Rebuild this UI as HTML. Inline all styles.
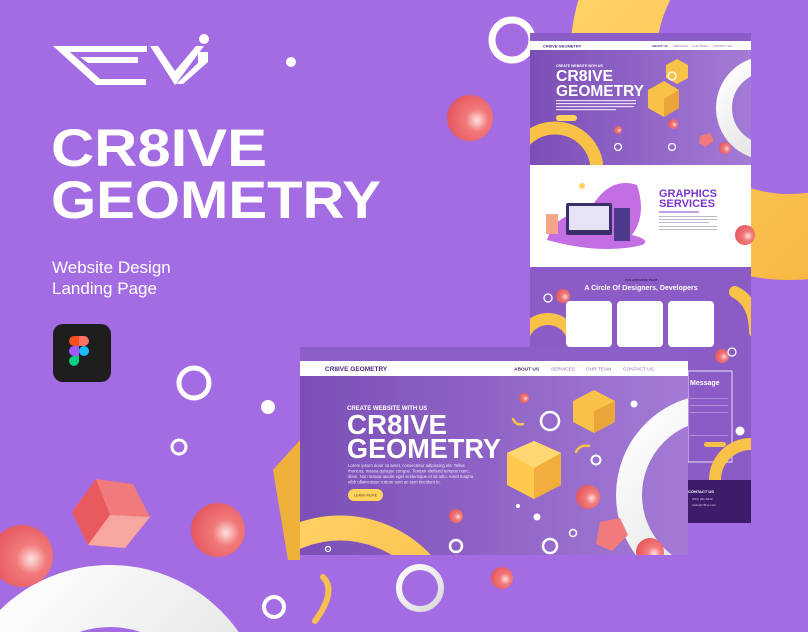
<!DOCTYPE html>
<html><head><meta charset="utf-8"><style>
html,body{margin:0;padding:0;width:808px;height:632px;overflow:hidden;background:#a46ce3}
svg{display:block}
text{font-family:"Liberation Sans",sans-serif}
</style></head><body>
<svg width="808" height="632" viewBox="0 0 808 632" xmlns="http://www.w3.org/2000/svg">
<defs>
<radialGradient id="sph" cx="0.65" cy="0.55" r="0.7"><stop offset="0" stop-color="#fde0e0"/><stop offset="0.35" stop-color="#f2797a"/><stop offset="1" stop-color="#e1535a"/></radialGradient>
<linearGradient id="wring" x1="0" y1="0" x2="1" y2="1"><stop offset="0" stop-color="#ffffff"/><stop offset="1" stop-color="#d8d8d8"/></linearGradient>
<linearGradient id="hero" x1="0" y1="0" x2="1" y2="0"><stop offset="0" stop-color="#7b4fb6"/><stop offset="1" stop-color="#a47ad6"/></linearGradient>
<linearGradient id="yel" x1="0" y1="0" x2="1" y2="1"><stop offset="0" stop-color="#ffd66b"/><stop offset="1" stop-color="#f7b33c"/></linearGradient>
<clipPath id="cR"><rect x="530" y="33" width="221" height="490"/></clipPath>
<clipPath id="cF"><rect x="300" y="347" width="388" height="208"/></clipPath>
<filter id="sh" x="-20%" y="-20%" width="140%" height="140%"><feDropShadow dx="-6" dy="6" stdDeviation="8" flood-color="#4a1f8a" flood-opacity="0.35"/></filter>
</defs>

<circle cx="790" cy="60" r="177" fill="none" stroke="url(#yel)" stroke-width="86"/>
<circle cx="110" cy="722" r="126" fill="none" stroke="url(#wring)" stroke-width="62"/>

<g fill="#fff">
<polygon points="53,46 108,46 116,52 70,52 100,79 146,79 146,85 96,85"/>
<polygon points="80,57 138,57 138,63 88,63"/>
<polygon points="98,46 147,46 147,52 106,52"/>
<polygon points="150,46 158,46 175,71 196,46 204,46 175,85"/>
<polygon points="198,52 208,52 208,62 183,84 176,84 198,63"/>
<circle cx="204" cy="39" r="5"/>
</g>
<circle cx="291" cy="62" r="5" fill="#fff"/>

<text x="51" y="166" font-size="53" font-weight="700" fill="#fff" textLength="216" lengthAdjust="spacingAndGlyphs">CR8IVE</text>
<text x="51" y="218" font-size="53" font-weight="700" fill="#fff" textLength="330" lengthAdjust="spacingAndGlyphs">GEOMETRY</text>
<text x="52" y="273" font-size="17" fill="#fff">Website Design</text>
<text x="52" y="294" font-size="17" fill="#fff">Landing Page</text>

<rect x="53" y="324" width="58" height="58" rx="10" fill="#1e1e1e"/>
<path d="M69,336h10v10h-5a5,5 0 0 1 0-10z" fill="#f24e1e"/>
<path d="M79,336h5a5,5 0 0 1 0,10h-5z" fill="#ff7262"/>
<path d="M69,346h10v10h-5a5,5 0 0 1 0-10z" fill="#a259ff"/>
<circle cx="84" cy="351" r="5" fill="#1abcfe"/>
<path d="M74,356h5v5a5,5 0 1 1 -5-5z" fill="#0acf83"/>

<circle cx="194" cy="383" r="15" fill="none" stroke="#fff" stroke-width="5"/>
<circle cx="268" cy="407" r="7" fill="#fff"/>
<circle cx="179" cy="447" r="7" fill="none" stroke="#fff" stroke-width="3"/>
<circle cx="470" cy="118" r="23" fill="url(#sph)"/>
<circle cx="512" cy="40" r="20" fill="none" stroke="#fff" stroke-width="7"/>
<g>
<polygon points="96,479 133,484 150,517 125,548 88,545 72,512" fill="#f07a7c"/>
<polygon points="96,479 72,512 88,545 110,515" fill="#e85a5e"/>
<polygon points="110,515 150,517 125,548 88,545" fill="#f7a7a0"/>
</g>
<circle cx="218" cy="530" r="27" fill="url(#sph)"/>
<circle cx="22" cy="556" r="31" fill="url(#sph)"/>
<polygon points="273,470 300,440 300,560 288,560" fill="#f0b13a"/>
<circle cx="274" cy="607" r="10" fill="none" stroke="#fff" stroke-width="4"/>
<circle cx="420" cy="588" r="21" fill="none" stroke="url(#wring)" stroke-width="6"/>
<path d="M323,577 q14,14 -8,44" fill="none" stroke="#f5c04e" stroke-width="6" stroke-linecap="round"/>
<circle cx="502" cy="578" r="11" fill="url(#sph)"/>

<g clip-path="url(#cR)" filter="url(#sh)">
<rect x="530" y="33" width="221" height="490" fill="#8a5cc6"/>
<rect x="530" y="41" width="221" height="9" fill="#fff"/>
<text x="543" y="47.5" font-size="4" font-weight="700" fill="#4a2a80">CR8IVE GEOMETRY</text>
<text x="652" y="47" font-size="3" font-weight="700" fill="#4a2a80">ABOUT US</text>
<text x="673" y="47" font-size="3" fill="#8a6aae">SERVICES</text>
<text x="692" y="47" font-size="3" fill="#8a6aae">OUR TEAM</text>
<text x="713" y="47" font-size="3" fill="#8a6aae">CONTACT US</text>
<rect x="530" y="50" width="221" height="115" fill="url(#hero)"/>
<text x="556" y="67" font-size="3.5" font-weight="700" fill="#fff">CREATE WEBSITE WITH US</text>
<text x="556" y="81" font-size="16" font-weight="700" fill="#fff" textLength="57" lengthAdjust="spacingAndGlyphs">CR8IVE</text>
<text x="556" y="96" font-size="16" font-weight="700" fill="#fff" textLength="88" lengthAdjust="spacingAndGlyphs">GEOMETRY</text>
<rect x="556" y="100" width="80" height="1.2" fill="#e8dcf6"/><rect x="556" y="103" width="80" height="1.2" fill="#e8dcf6"/><rect x="556" y="106" width="78" height="1.2" fill="#e8dcf6"/><rect x="556" y="109" width="60" height="1.2" fill="#e8dcf6"/>
<rect x="556" y="115" width="21" height="6" rx="3" fill="#ffd35c"/>
<circle cx="555" cy="170" r="42" fill="none" stroke="#f8c24a" stroke-width="13"/>
<polygon points="666,65 677,59 688,65 688,78 677,84 666,78" fill="#f8c24a"/>
<polygon points="648,90 664,81 679,90 679,108 664,117 648,108" fill="#f8c24a"/>
<polygon points="664,99 679,90 679,108 664,117" fill="#e9a43a"/>
<circle cx="768" cy="108" r="44" fill="none" stroke="url(#wring)" stroke-width="16"/>
<circle cx="673" cy="124" r="5" fill="url(#sph)"/>
<circle cx="725" cy="148" r="6" fill="url(#sph)"/>
<polygon points="700,136 710,133 714,141 705,147 699,143" fill="#f07a7c"/>
<circle cx="618" cy="130" r="4" fill="url(#sph)"/>
<circle cx="672" cy="76" r="4" fill="none" stroke="#fff" stroke-width="1.3"/>
<circle cx="618" cy="147" r="3.5" fill="none" stroke="#fff" stroke-width="1.3"/>
<circle cx="672" cy="147" r="3.5" fill="none" stroke="#fff" stroke-width="1.3"/>
<rect x="530" y="165" width="221" height="102" fill="#fff"/>
<path d="M547,240 q10,-30 40,-25 q20,-40 50,-30 q10,30 -5,50 q20,5 10,10 q-40,10 -95,-5z" fill="#c46ee4"/>
<rect x="566" y="203" width="46" height="32" rx="2" fill="#3b2d6a"/>
<rect x="569" y="206" width="40" height="24" fill="#e8e2f6"/>
<rect x="614" y="208" width="16" height="33" fill="#4c3a8a"/>
<rect x="546" y="214" width="12" height="20" fill="#f4a58a"/>
<circle cx="582" cy="186" r="3" fill="#ffd35c"/>
<text x="659" y="197" font-size="11" font-weight="700" fill="#7a35d0" textLength="58" lengthAdjust="spacingAndGlyphs">GRAPHICS</text>
<text x="659" y="207" font-size="11" font-weight="700" fill="#7a35d0" textLength="56" lengthAdjust="spacingAndGlyphs">SERVICES</text>
<rect x="659" y="211" width="40" height="2" fill="#c4a0ea"/>
<rect x="659" y="216" width="58" height="0.9" fill="#b8b0c8"/><rect x="659" y="219" width="58" height="0.9" fill="#b8b0c8"/><rect x="659" y="222" width="50" height="0.9" fill="#b8b0c8"/><rect x="659" y="226" width="58" height="0.9" fill="#b8b0c8"/><rect x="659" y="229" width="58" height="0.9" fill="#b8b0c8"/>
<rect x="530" y="267" width="221" height="213" fill="#8b5cc6"/>
<text x="641" y="281" font-size="3" text-anchor="middle" fill="#3a1f66" font-weight="700">OUR AWESOME TEAM</text>
<text x="641" y="290" font-size="7" text-anchor="middle" fill="#fff" font-weight="700">A Circle Of Designers, Developers</text>
<circle cx="548" cy="298" r="4" fill="none" stroke="#fff" stroke-width="1.3"/>
<circle cx="563" cy="296" r="7" fill="url(#sph)"/>
<circle cx="548" cy="345" r="26" fill="none" stroke="#f8c24a" stroke-width="12"/>
<path d="M735,292 q20,10 20,40" fill="none" stroke="#f8c24a" stroke-width="12" stroke-linecap="round"/>
<rect x="566" y="301" width="46" height="46" rx="4" fill="#fff"/>
<rect x="617" y="301" width="46" height="46" rx="4" fill="#fff"/>
<rect x="668" y="301" width="46" height="46" rx="4" fill="#fff"/>
<circle cx="722" cy="356" r="7" fill="url(#sph)"/>
<circle cx="732" cy="352" r="4" fill="none" stroke="#fff" stroke-width="1.2"/>
<rect x="688" y="371" width="44" height="91" fill="none" stroke="#fff" stroke-width="0.8"/>
<text x="690" y="385" font-size="7" font-weight="700" fill="#fff">Message</text>
<rect x="690" y="398" width="38" height="0.8" fill="#b89ae0"/><rect x="690" y="405" width="38" height="0.8" fill="#b89ae0"/><rect x="690" y="412" width="38" height="0.8" fill="#b89ae0"/><rect x="690" y="435" width="38" height="0.8" fill="#b89ae0"/>
<rect x="704" y="442" width="22" height="5" rx="2.5" fill="#f8c24a"/>
<circle cx="740" cy="431" r="4.5" fill="#fff"/>
<circle cx="751" cy="480" r="36" fill="none" stroke="#f8c24a" stroke-width="12"/>
<rect x="530" y="480" width="221" height="43" fill="#3e1f6a"/>
<text x="688" y="493" font-size="4" font-weight="700" fill="#fff">CONTACT US</text>
<text x="692" y="500" font-size="3" fill="#d8c8ee">(614) 321-5432</text>
<text x="692" y="506" font-size="3" fill="#d8c8ee">hello@cr8ive.com</text>
</g>
<circle cx="745" cy="235" r="10" fill="url(#sph)"/>

<g clip-path="url(#cF)" filter="url(#sh)">
<rect x="300" y="347" width="388" height="208" fill="#8c5ec8"/>
<rect x="300" y="361" width="388" height="15" fill="#fff"/>
<text x="325" y="371" font-size="6.5" font-weight="700" fill="#4a2a80">CR8IVE GEOMETRY</text>
<text x="514" y="370.5" font-size="4.8" font-weight="700" fill="#3a2066">ABOUT US</text>
<text x="551" y="370.5" font-size="4.8" fill="#8a6aae">SERVICES</text>
<text x="586" y="370.5" font-size="4.8" fill="#8a6aae">OUR TEAM</text>
<text x="623" y="370.5" font-size="4.8" fill="#8a6aae">CONTACT US</text>
<rect x="300" y="376" width="388" height="179" fill="url(#hero)"/>
<circle cx="717" cy="495" r="88" fill="none" stroke="url(#wring)" stroke-width="26"/>
<circle cx="340" cy="640" r="112" fill="none" stroke="url(#yel)" stroke-width="25"/>
<text x="347" y="410" font-size="6" font-weight="700" fill="#fff">CREATE WEBSITE WITH US</text>
<text x="347" y="434" font-size="28" font-weight="700" fill="#fff" textLength="100" lengthAdjust="spacingAndGlyphs">CR8IVE</text>
<text x="347" y="458" font-size="28" font-weight="700" fill="#fff" textLength="154" lengthAdjust="spacingAndGlyphs">GEOMETRY</text>
<text x="348" y="467" font-size="4.3" fill="#f0e6fb">Lorem ipsum dolor sit amet, consectetur adipiscing elit. Tellus</text>
<text x="348" y="472.5" font-size="4.3" fill="#f0e6fb">rhoncus, massa quisque congue. Tempor eleifend tempus nunc,</text>
<text x="348" y="478" font-size="4.3" fill="#f0e6fb">diam. Non massa iaculis eget scelerisque et sit odio. Amet magna</text>
<text x="348" y="483.5" font-size="4.3" fill="#f0e6fb">nibh ullamcorper rutrum sem ac sem tincidunt in.</text>
<rect x="348" y="489" width="35" height="12" rx="6" fill="#ffd35c"/>
<text x="365.5" y="496.5" font-size="3.5" text-anchor="middle" fill="#6a4a20">LEARN MORE</text>
<polygon points="573,401 594,390 615,401 615,422 594,433 573,422" fill="#f8c24a"/>
<polygon points="594,411 615,401 615,422 594,433" fill="#eaa63a"/>
<polygon points="507,453 534,441 561,453 561,485 534,499 507,485" fill="#ffc94e"/>
<polygon points="534,468 561,453 561,485 534,499" fill="#f2ae3c"/>
<polygon points="507,453 534,441 561,453 534,468" fill="#ffd873"/>
<circle cx="524" cy="398" r="5" fill="url(#sph)"/>
<circle cx="588" cy="497" r="12" fill="url(#sph)"/>
<circle cx="456" cy="516" r="7" fill="url(#sph)"/>
<polygon points="600,522 620,518 628,535 612,551 596,544" fill="#f07a7c"/>
<circle cx="650" cy="552" r="14" fill="url(#sph)"/>
<circle cx="550" cy="421" r="9" fill="none" stroke="#fff" stroke-width="2.5"/>
<circle cx="596" cy="460" r="4.5" fill="none" stroke="#fff" stroke-width="2"/>
<circle cx="456" cy="546" r="6" fill="none" stroke="#fff" stroke-width="2.5"/>
<circle cx="550" cy="546" r="7" fill="none" stroke="#fff" stroke-width="2.5"/>
<circle cx="573" cy="533" r="3.5" fill="none" stroke="#fff" stroke-width="1.5"/>
<circle cx="634" cy="404" r="3.5" fill="#fff"/>
<circle cx="537" cy="517" r="3.5" fill="#fff"/>
<circle cx="518" cy="506" r="2" fill="#fff"/>
<circle cx="328" cy="549" r="2.5" fill="none" stroke="#fff" stroke-width="1.2"/>
<path d="M513,419 q3,7 10,5" fill="none" stroke="#f8c24a" stroke-width="2.5" stroke-linecap="round"/>
<path d="M576,452 q4,-8 13,-6" fill="none" stroke="#f8c24a" stroke-width="2.5" stroke-linecap="round"/>
</g>
</svg>
</body></html>
